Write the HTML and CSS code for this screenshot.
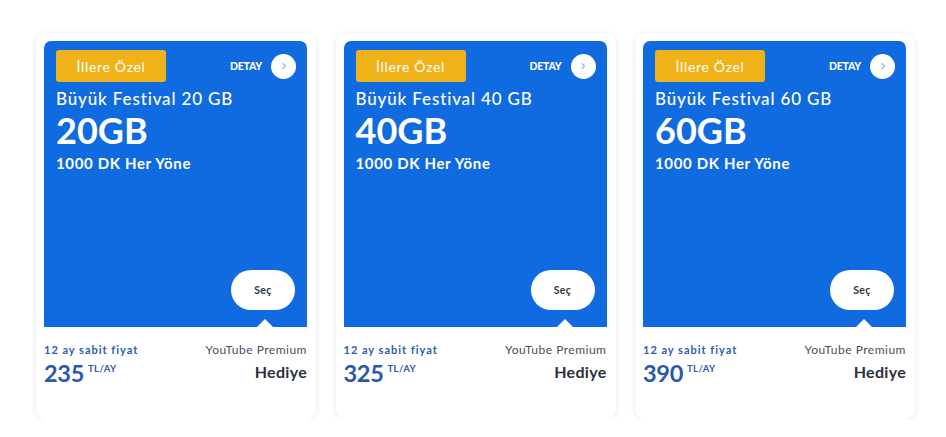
FILE: index.html
```html
<!DOCTYPE html>
<html lang="tr">
<head>
<meta charset="utf-8">
<link rel="stylesheet" href="styles.css">
</head>
<body>
<div class="cards">
  <div class="card">
    <div class="hero">
      <div class="head">
        <span class="badge">İllere Özel</span>
        <span class="detail">DETAY <span class="circle"><svg width="10" height="10" viewBox="0 0 10 10"><path d="M4 2.5 L6.5 5 L4 7.5" fill="none" stroke="#8fb4ec" stroke-width="1.1" stroke-linecap="round" stroke-linejoin="round"/></svg></span></span>
      </div>
      <div class="title">Büyük Festival 20 GB</div>
      <div class="gb">20GB</div>
      <div class="min">1000 DK Her Yöne</div>
      <button class="sec">Seç</button>
      <span class="notch"></span>
    </div>
    <div class="foot">
      <div class="left">
        <div class="fixed">12 ay sabit fiyat</div>
        <div class="price">235<sup>TL/AY</sup></div>
      </div>
      <div class="right">
        <div class="yt">YouTube Premium</div>
        <div class="gift">Hediye</div>
      </div>
    </div>
  </div>
  <div class="card">
    <div class="hero">
      <div class="head">
        <span class="badge">İllere Özel</span>
        <span class="detail">DETAY <span class="circle"><svg width="10" height="10" viewBox="0 0 10 10"><path d="M4 2.5 L6.5 5 L4 7.5" fill="none" stroke="#8fb4ec" stroke-width="1.1" stroke-linecap="round" stroke-linejoin="round"/></svg></span></span>
      </div>
      <div class="title">Büyük Festival 40 GB</div>
      <div class="gb">40GB</div>
      <div class="min">1000 DK Her Yöne</div>
      <button class="sec">Seç</button>
      <span class="notch"></span>
    </div>
    <div class="foot">
      <div class="left">
        <div class="fixed">12 ay sabit fiyat</div>
        <div class="price">325<sup>TL/AY</sup></div>
      </div>
      <div class="right">
        <div class="yt">YouTube Premium</div>
        <div class="gift">Hediye</div>
      </div>
    </div>
  </div>
  <div class="card">
    <div class="hero">
      <div class="head">
        <span class="badge">İllere Özel</span>
        <span class="detail">DETAY <span class="circle"><svg width="10" height="10" viewBox="0 0 10 10"><path d="M4 2.5 L6.5 5 L4 7.5" fill="none" stroke="#8fb4ec" stroke-width="1.1" stroke-linecap="round" stroke-linejoin="round"/></svg></span></span>
      </div>
      <div class="title">Büyük Festival 60 GB</div>
      <div class="gb">60GB</div>
      <div class="min">1000 DK Her Yöne</div>
      <button class="sec">Seç</button>
      <span class="notch"></span>
    </div>
    <div class="foot">
      <div class="left">
        <div class="fixed">12 ay sabit fiyat</div>
        <div class="price">390<sup>TL/AY</sup></div>
      </div>
      <div class="right">
        <div class="yt">YouTube Premium</div>
        <div class="gift">Hediye</div>
      </div>
    </div>
  </div>
</div>
</body>
</html>
```
FILE: styles.css
```css
* { box-sizing: border-box; }
html, body { margin: 0; padding: 0; background: #fff; }
body { font-family: Lato, "Open Sans", sans-serif; }
.cards {
  display: flex;
  gap: 19.5px;
  padding: 33px 0 0 36px;
}
.card {
  width: 280px;
  height: 386px;
  background: #fff;
  border-radius: 10px;
  box-shadow: 0 1px 6px rgba(0,0,0,0.09);
  padding: 8px 9px 0 8px;
}
.hero {
  position: relative;
  height: 286px;
  background: #116be0;
  border-radius: 7px 7px 0 0;
  padding: 9px 11px 17px 12px;
  display: flex;
  flex-direction: column;
  color: #fff;
}
.head {
  display: flex;
  justify-content: space-between;
  align-items: center;
}
.badge {
  width: 110px;
  height: 32px;
  background: #efb218;
  border-radius: 3px;
  font-size: 14px;
  display: flex;
  align-items: center;
  justify-content: center;
  letter-spacing: 0.7px;
}
.detail {
  display: flex;
  align-items: center;
  gap: 9px;
  font-size: 10.5px;
  font-weight: 900;
  letter-spacing: -0.2px;
}
.circle {
  width: 25px;
  height: 25px;
  border-radius: 50%;
  background: #fff;
  display: flex;
  align-items: center;
  justify-content: center;
}
.title {
  margin-top: 7px;
  font-size: 17px;
  line-height: 20px;
  font-weight: 500;
  letter-spacing: 0.85px;
}
.gb {
  margin-top: 1px;
  font-size: 36px;
  line-height: 40px;
  font-weight: 700;
}
.min {
  margin-top: 3px;
  font-size: 15px;
  line-height: 20px;
  font-weight: 700;
  letter-spacing: 0.65px;
}
.sec {
  margin-top: auto;
  align-self: flex-end;
  width: 64px;
  height: 40px;
  border: none;
  border-radius: 20px;
  background: #fff;
  color: #2f3541;
  font-family: inherit;
  font-size: 10.5px;
  font-weight: 700;
  letter-spacing: 0.4px;
  margin-right: 1px;
}
.notch {
  position: absolute;
  bottom: 0;
  left: 213px;
  width: 0;
  height: 0;
  border-left: 8px solid transparent;
  border-right: 8px solid transparent;
  border-bottom: 8px solid #fff;
}
.foot {
  display: flex;
  justify-content: space-between;
  padding-top: 16px;
}
.fixed {
  color: #2c5bb3;
  font-size: 11px;
  font-weight: 700;
  letter-spacing: 1px;
  line-height: 14px;
}
.price {
  color: #2a58ad;
  font-size: 23.5px;
  font-weight: 700;
  line-height: 28px;
  margin-top: 2px;
  letter-spacing: -0.3px;
}
.price sup {
  font-size: 9.5px;
  vertical-align: top;
  position: relative;
  top: -4px;
  margin-left: 4px;
  letter-spacing: 0.4px;
}
.right { text-align: right; }
.yt {
  color: #4a4f5a;
  font-size: 12px;
  line-height: 14px;
  letter-spacing: 0.5px;
}
.gift {
  color: #2b303b;
  font-size: 16px;
  font-weight: 700;
  line-height: 20px;
  margin-top: 5px;
  letter-spacing: 0.3px;
}
```
